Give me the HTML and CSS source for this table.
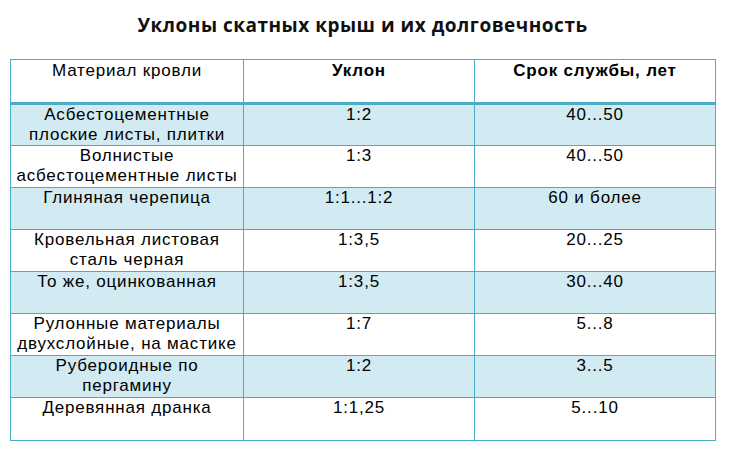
FILE: index.html
```html
<!DOCTYPE html>
<html lang="ru">
<head>
<meta charset="utf-8">
<link rel="stylesheet" href="styles.css">
</head>
<body>
<h1 class="title">Уклоны скатных крыш и их долговечность</h1>
<table class="grid">
  <colgroup><col class="c1"><col class="c2"><col class="c3"></colgroup>
  <thead>
    <tr><th class="plain">Материал кровли</th><th>Уклон</th><th>Срок службы, лет</th></tr>
  </thead>
  <tbody>
    <tr class="shade"><td>Асбестоцементные<br>плоские листы, плитки</td><td>1:2</td><td>40...50</td></tr>
    <tr><td>Волнистые<br>асбестоцементные листы</td><td>1:3</td><td>40...50</td></tr>
    <tr class="shade"><td>Глиняная черепица</td><td>1:1...1:2</td><td>60 и более</td></tr>
    <tr><td>Кровельная листовая<br>сталь черная</td><td>1:3,5</td><td>20...25</td></tr>
    <tr class="shade"><td>То же, оцинкованная</td><td>1:3,5</td><td>30...40</td></tr>
    <tr><td>Рулонные материалы<br>двухслойные, на мастике</td><td>1:7</td><td>5...8</td></tr>
    <tr class="shade"><td>Рубероидные по<br>пергамину</td><td>1:2</td><td>3...5</td></tr>
    <tr><td>Деревянная дранка</td><td>1:1,25</td><td>5...10</td></tr>
  </tbody>
</table>
</body>
</html>
```
FILE: styles.css
```css
html, body {
  margin: 0;
  padding: 0;
  background: #ffffff;
}
body {
  padding: 0 14px 0 10px;
  font-family: "Liberation Sans", Arial, sans-serif;
  color: #000;
}
.title {
  margin: 0;
  height: 59px;
  padding-top: 10px;
  box-sizing: border-box;
  text-align: center;
  font-family: "Open Sans", "Noto Sans", sans-serif;
  font-weight: 700;
  font-size: 19px;
  letter-spacing: 0.5px;
  line-height: 30px;
  color: #111;
}
.grid {
  border-collapse: collapse;
  width: 705px;
  table-layout: fixed;
  font-size: 17px;
  letter-spacing: 0.8px;
  line-height: 20px;
}
.c1 { width: 233px; }
.c2 { width: 231px; }
.c3 { width: 241px; }
.grid th, .grid td {
  border: 1px solid #4bacc6;
  text-align: center;
  vertical-align: top;
  padding: 0 1px;
  height: 42px;
  box-sizing: border-box;
}
.grid th {
  font-weight: 700;
  padding-top: 1px;
  height: 44px;
  border-bottom: 3px solid #4bacc6;
}
.grid th.plain { font-weight: 400; }
.grid tr.shade td { background: #d2eaf1; }
.grid tbody tr:last-child td { height: 43px; }
```
